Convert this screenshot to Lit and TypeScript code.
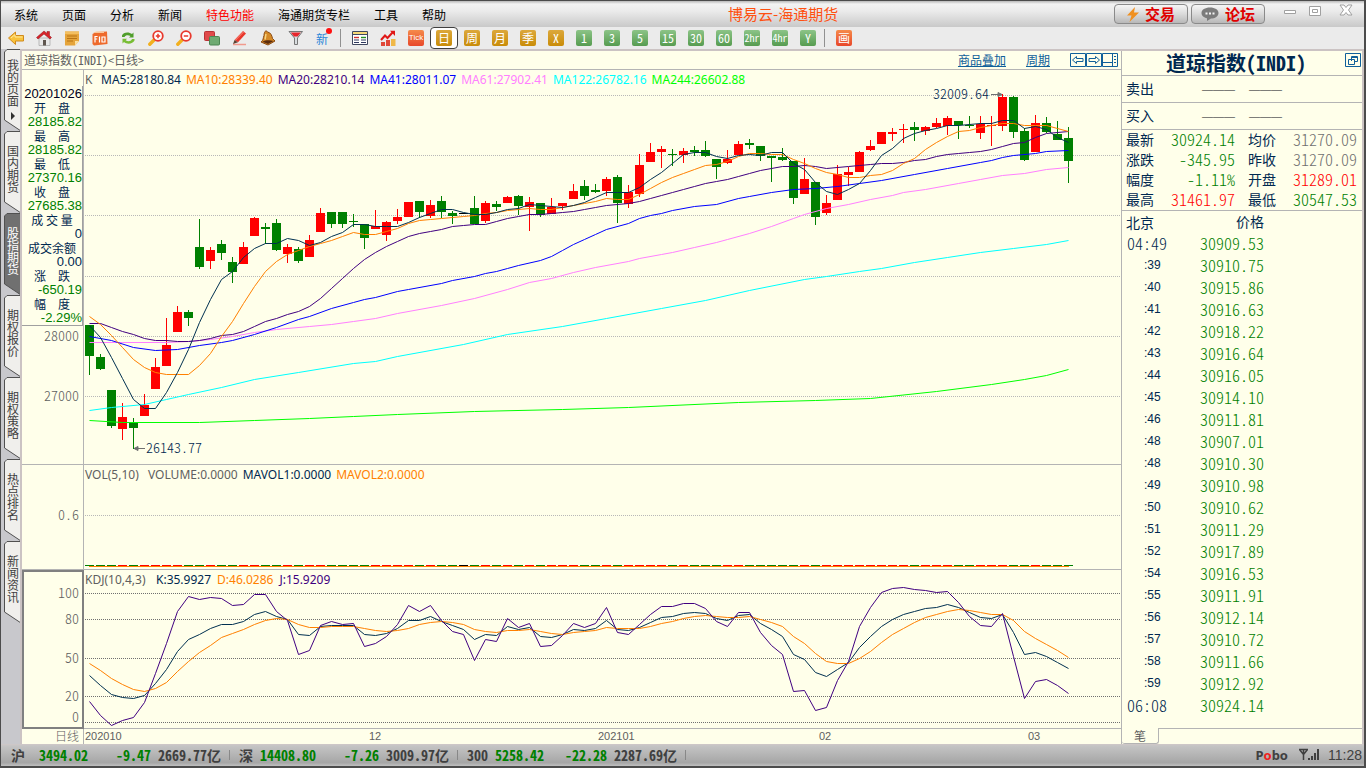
import { LitElement, html, svg, css } from "lit";
import { customElement } from "lit/decorators.js";
import { classMap } from "lit/directives/class-map.js";

type Candle = [string, number, number, number, number];

/* colour, body top, body bottom, wick top, wick bottom */
const CANDLES: Candle[] = [
  ["g", 325, 356, 325, 375], ["g", 357, 369, 354, 370], ["g", 390, 426, 390, 428], ["r", 417, 429, 403, 440],
  ["g", 422, 428, 418, 449], ["r", 405, 416, 394, 416], ["r", 367, 389, 358, 389], ["r", 345, 366, 318, 366],
  ["r", 312, 332, 306, 332], ["g", 312, 318, 310, 326], ["g", 247, 267, 219, 269], ["r", 250, 261, 247, 269],
  ["g", 244, 253, 240, 260], ["g", 262, 272, 257, 283], ["r", 247, 264, 242, 264], ["r", 218, 236, 217, 236],
  ["g", 227, 229, 223, 244], ["g", 223, 250, 219, 251], ["r", 247, 254, 244, 263], ["g", 249, 261, 247, 263],
  ["r", 240, 257, 235, 257], ["r", 213, 232, 208, 232], ["g", 212, 224, 212, 228], ["g", 212, 224, 212, 228],
  ["g", 221, 222, 214, 227], ["g", 224, 238, 224, 249], ["r", 226, 229, 210, 229], ["r", 222, 235, 221, 241],
  ["r", 217, 221, 209, 224], ["r", 202, 217, 202, 217], ["g", 201, 212, 201, 218], ["r", 205, 216, 200, 218],
  ["g", 201, 212, 196, 218], ["g", 213, 216, 211, 224], ["n", 213, 214, 213, 214], ["g", 208, 224, 196, 224],
  ["r", 203, 221, 201, 223], ["g", 204, 207, 201, 211], ["r", 197, 203, 196, 203], ["g", 196, 206, 195, 215],
  ["r", 202, 207, 197, 231], ["g", 203, 215, 203, 217], ["r", 207, 214, 198, 214], ["r", 203, 206, 203, 210],
  ["r", 191, 199, 184, 199], ["g", 186, 196, 180, 200], ["g", 190, 192, 184, 193], ["r", 179, 191, 177, 196],
  ["g", 177, 203, 175, 223], ["r", 192, 204, 185, 208], ["r", 165, 194, 154, 197], ["r", 152, 162, 143, 162],
  ["r", 149, 152, 146, 168], ["g", 154, 155, 149, 166], ["r", 151, 155, 148, 163], ["g", 150, 152, 146, 156],
  ["g", 150, 156, 141, 157], ["g", 159, 167, 159, 179], ["r", 159, 163, 150, 164], ["r", 144, 155, 141, 155],
  ["g", 143, 145, 139, 149], ["g", 146, 156, 146, 161], ["g", 156, 158, 156, 182], ["g", 157, 160, 148, 161],
  ["g", 161, 198, 161, 204], ["r", 179, 194, 158, 194], ["g", 182, 217, 182, 225], ["r", 203, 213, 195, 215],
  ["r", 174, 200, 165, 200], ["r", 172, 175, 167, 186], ["r", 152, 172, 151, 172], ["r", 146, 150, 140, 151],
  ["r", 132, 144, 132, 144], ["r", 132, 134, 128, 141], ["r", 129, 130, 124, 143], ["g", 127, 130, 122, 141],
  ["r", 127, 131, 126, 135], ["r", 123, 127, 118, 128], ["r", 118, 126, 116, 135], ["g", 121, 125, 121, 139],
  ["g", 125, 126, 116, 128], ["r", 124, 133, 116, 139], ["r", 125, 126, 116, 146], ["r", 97, 126, 94, 131],
  ["g", 97, 132, 96, 138], ["g", 131, 160, 128, 161], ["r", 123, 152, 115, 152], ["g", 123, 132, 117, 133],
  ["g", 134, 140, 121, 140], ["g", 138, 161, 127, 183],
];

/* one value per trading day */
const MA5 = [325, 337, 357, 378, 399, 408, 408, 392, 372, 349, 322, 299, 279, 271, 257, 248, 243, 243, 238, 240, 245, 242, 236, 232, 224, 224, 226, 226, 226, 222, 217, 213, 209, 209, 212, 214, 214, 212, 209, 208, 204, 205, 206, 207, 205, 202, 197, 192, 192, 192, 187, 179, 172, 163, 154, 152, 152, 156, 158, 155, 154, 155, 152, 152, 163, 169, 182, 191, 194, 189, 183, 170, 155, 148, 138, 133, 130, 128, 125, 125, 124, 123, 123, 120, 120, 128, 126, 129, 137, 142];
const MA10 = [316, 324, 335, 347, 359, 367, 372, 374, 374, 374, 365, 353, 336, 321, 303, 286, 271, 261, 254, 250, 246, 243, 240, 236, 232, 234, 234, 231, 228, 223, 220, 219, 218, 217, 216, 215, 213, 212, 210, 209, 208, 209, 209, 207, 205, 203, 201, 198, 199, 199, 194, 188, 182, 177, 173, 169, 165, 164, 161, 156, 153, 153, 154, 154, 159, 163, 168, 172, 174, 177, 177, 175, 174, 170, 163, 158, 149, 142, 136, 131, 130, 127, 125, 123, 123, 125, 125, 125, 128, 131];
const MA20 = [323, 323, 327, 331, 334, 338, 340, 340, 341, 341, 340, 338, 335, 334, 331, 326, 321, 318, 314, 311, 306, 298, 288, 278, 268, 259, 252, 246, 241, 236, 233, 231, 229, 226, 225, 224, 224, 221, 218, 216, 214, 214, 213, 212, 211, 209, 207, 205, 204, 203, 201, 198, 195, 192, 189, 186, 183, 181, 179, 176, 173, 170, 168, 166, 166, 165, 166, 168, 167, 166, 165, 164, 163, 163, 162, 160, 159, 156, 154, 153, 152, 151, 149, 146, 143, 142, 137, 133, 132, 131];
const KLINE = [675, 685, 694, 697, 698, 695, 683, 669, 651, 639, 634, 628, 624, 624, 621, 614, 611, 616, 619, 634, 635, 626, 625, 625, 625, 634, 635, 633, 628, 620, 620, 616, 621, 625, 629, 639, 634, 635, 626, 629, 627, 636, 637, 634, 629, 630, 628, 620, 629, 630, 627, 622, 617, 616, 613, 612, 613, 618, 620, 615, 614, 623, 629, 636, 654, 659, 672, 676, 669, 662, 647, 636, 626, 619, 614, 611, 608, 607, 604, 607, 612, 617, 618, 614, 632, 654, 652, 656, 662, 668];
const DLINE = [663, 670, 678, 684, 689, 691, 688, 682, 671, 661, 652, 645, 637, 633, 629, 624, 620, 618, 619, 624, 627, 627, 626, 626, 626, 628, 630, 631, 630, 628, 624, 622, 621, 622, 624, 629, 631, 632, 630, 630, 629, 631, 633, 634, 632, 631, 630, 627, 628, 628, 628, 626, 623, 621, 618, 616, 615, 616, 617, 617, 616, 619, 622, 626, 636, 643, 653, 661, 663, 663, 658, 651, 642, 634, 628, 622, 617, 614, 611, 609, 610, 612, 614, 614, 620, 631, 638, 644, 650, 657];
const JLINE = [701, 715, 725, 720, 717, 702, 673, 643, 611, 596, 599, 597, 598, 605, 604, 594, 594, 611, 620, 654, 650, 625, 621, 624, 623, 646, 643, 636, 624, 605, 611, 605, 620, 631, 634, 660, 639, 641, 618, 627, 623, 646, 645, 635, 623, 627, 623, 607, 632, 634, 624, 614, 606, 606, 603, 603, 608, 621, 626, 612, 612, 632, 645, 654, 691, 690, 710, 707, 680, 661, 626, 607, 592, 588, 587, 589, 590, 592, 591, 602, 616, 625, 626, 613, 656, 698, 681, 679, 685, 693];

/* slow averages: [day, value] */
const MA41 = [[0, 336], [2, 340], [4, 347], [6, 350], [8, 349], [10, 345], [12, 342], [13, 340], [15, 334], [17, 327], [19, 319], [20, 316], [22, 308], [24, 302], [25, 299], [26, 297], [28, 291], [29, 289], [32, 283], [33, 280], [35, 276], [36, 273], [37, 271], [38, 268], [39, 265], [41, 260], [42, 256], [43, 250], [44, 244], [45, 239], [46, 234], [47, 229], [49, 223], [50, 218], [51, 215], [52, 213], [53, 210], [55, 206], [57, 204], [59, 198], [60, 196], [62, 192], [64, 189], [66, 188], [68, 186], [70, 183], [72, 180], [75, 174], [78, 168], [81, 162], [82, 160], [83, 157], [84, 155], [86, 153], [87, 151], [89, 150]];
const MA61 = [[0, 342], [3, 342], [7, 342], [9, 341], [11, 339], [13, 336], [15, 332], [17, 329], [20, 326], [22, 324], [24, 321], [26, 318], [28, 313], [32, 305], [35, 298], [38, 289], [40, 282], [42, 278], [44, 272], [46, 267], [49, 261], [50, 258], [52, 254], [53, 252], [55, 247], [57, 242], [58, 239], [60, 233], [62, 226], [64, 218], [65, 214], [67, 208], [69, 204], [71, 199], [73, 195], [74, 192], [76, 189], [79, 183], [81, 179], [83, 175], [85, 173], [87, 169], [89, 167]];
const MA122 = [[0, 410], [2, 407], [5, 404], [7, 399], [9, 394], [12, 387], [15, 379], [19, 372], [24, 363], [26, 361], [28, 356], [34, 344], [38, 334], [43, 326], [47, 318], [52, 308], [56, 300], [60, 290], [65, 279], [67, 276], [70, 271], [72, 268], [75, 262], [78, 257], [81, 252], [84, 248], [87, 244], [89, 240]];
const MA244 = [[0, 420], [3, 422], [10, 422], [15, 420], [20, 418], [24, 416], [28, 414], [35, 411], [43, 409], [49, 407], [59, 402], [66, 400], [71, 398], [77, 391], [82, 384], [85, 379], [87, 375], [89, 369]];

const dayX = (i: number) => 89.5 + i * 11;
const daily = (ys: number[]) => ys.map((y, i) => `${dayX(i)},${y + 0.5}`).join(" ");
const sparse = (ps: number[][]) => ps.map(([i, y]) => `${dayX(i)},${y + 0.5}`).join(" ");
const pct = (v: number, from: number, size: number) => `${((v - from) / size) * 100}%`;

const MENU = ["系统", "页面", "分析", "新闻", "特色功能", "海通期货专栏", "工具", "帮助"];
const TABS = ["我的页面", "国内期货", "股指期货", "期权报价", "期权策略", "热点排名", "新闻资讯"];
const INFO = [
  ["开　盘", "28185.82", "up"], ["最　高", "28185.82", "up"], ["最　低", "27370.16", "up"], ["收　盘", "27685.38", "up"],
  ["成 交 量", "0", ""], ["成交余额", "0.00", ""], ["涨　跌", "-650.19", "up"], ["幅　度", "-2.29%", "up"],
];
const QUOTES = [
  ["最新", "30924.14", "green", "均价", "31270.09", "gray"],
  ["涨跌", "-345.95", "green", "昨收", "31270.09", "gray"],
  ["幅度", "-1.11%", "green", "开盘", "31289.01", "red"],
  ["最高", "31461.97", "red", "最低", "30547.53", "green"],
];
const TICKS = [
  ["04:49", "30909.53"], [":39", "30910.75"], [":40", "30915.86"], [":41", "30916.63"], [":42", "30918.22"],
  [":43", "30916.64"], [":44", "30916.05"], [":45", "30914.10"], [":46", "30911.81"], [":48", "30907.01"],
  [":48", "30910.30"], [":49", "30910.98"], [":50", "30910.62"], [":51", "30911.29"], [":52", "30917.89"],
  [":54", "30916.53"], [":55", "30911.91"], [":56", "30912.14"], [":57", "30910.72"], [":58", "30911.66"],
  [":59", "30912.92"], ["06:08", "30924.14"],
];
const INDEXES = [
  ["沪", "3494.02", "-9.47", "2669.77亿"],
  ["深", "14408.80", "-7.26", "3009.97亿"],
  ["300", "5258.42", "-22.28", "2287.69亿"],
];

const ICONS: [string, unknown][] = [
  ["后退", svg`<path d="M0.5 8L7.5 2V5.5H15.5V11H7.5V14.5Z" fill="#f8c33c" stroke="#d08a1c"/><path d="M3 8L7 4.6V7H14.5" fill="none" stroke="#ffe89a"/>`],
  ["首页", svg`<path d="M3 8H14V15.5H3Z" fill="#e8e8e8" stroke="#999" stroke-width=".6"/><path d="M8 1L0.5 7.5L2 9L8 4L14 9L15.5 7.5L13.5 5.6V1.5H11V3.4Z" fill="#d8232a" stroke="#8d1218" stroke-width=".5"/><path d="M7 10H10V15.5H7Z" fill="#5f564f"/>`],
  ["便签", svg`<path d="M1 1.5H15V11L11 15.5H1Z" fill="#e5a43a"/><path d="M1 1.5H15V4H1Z" fill="#f3bf60"/><path d="M15 11L11 15.5V11Z" fill="#fbe0a0"/><path d="M3 6H13M3 8.5H13M3 11H9" stroke="#b87414"/>`],
  ["F10", svg`<path d="M0.5 4L4 2L15 1.5L15.5 14L2 15.5L0.5 14Z" fill="#ee6a2c"/><path d="M1 3H12V1.5H4Z" fill="#f9c79b"/><path d="M3 12.5V6.5H5.6M3 9H5.2M7.5 6.5V12.5M10 7H13V12H10Z" fill="none" stroke="#fff" stroke-width="1.2"/>`],
  ["刷新", svg`<path d="M2 7V5.5C3 2 9 1.5 12 4L13.5 2.5V7.5H9L10.5 6C8 4.5 5.5 5 4.5 7Z" fill="#4f9d2b"/><path d="M14.5 9V10.5C13 14 7 14.8 4 12L2.5 13.5V8.8H7L5.7 10.2C8 12 11 11.3 12 9Z" fill="#78bd35"/>`],
  ["放大", svg`<path d="M1.8 14.2L6 10" stroke="#f2b01e" stroke-width="3.4" stroke-linecap="round"/><circle cx="10" cy="6" r="4.8" fill="#fff" stroke="#e8392d" stroke-width="1.8"/><path d="M7.8 6H12.2M10 3.8V8.2" stroke="#e8392d" stroke-width="1.5"/>`],
  ["缩小", svg`<path d="M1.8 14.2L6 10" stroke="#f2b01e" stroke-width="3.4" stroke-linecap="round"/><circle cx="10" cy="6" r="4.8" fill="#fff" stroke="#e8392d" stroke-width="1.8"/><path d="M7.8 6H12.2" stroke="#e8392d" stroke-width="1.5"/>`],
  ["叠加", svg`<rect x=".5" y="1.5" width="10" height="9" rx="1" fill="#e04a4a" stroke="#b83236"/><rect x="5.5" y="6.5" width="10" height="8.500" rx="1" fill="#6eaa72" stroke="#4b8652"/>`],
  ["画线", svg`<path d="M1 14.500H14" stroke="#f19a8d" stroke-width="1.5"/><path d="M2.5 10L11 1L14 3.500L6 12.200Z" fill="#e8372b"/><path d="M2.500 10L1 14L6 12.200Z" fill="#5b4433"/><path d="M3.600 10L11.500 2" stroke="#ff8d80"/>`],
  ["预警", svg`<path d="M5 1.500C6 0.500 7 1 7.500 2C11 2.500 12 6 12.500 8.500L15 11L8 15L1 12C3.500 10.500 3 8 4 5.500C4 3.500 4.500 2.500 5 1.500Z" fill="#d58a28" stroke="#8a4a12"/><path d="M2.500 11.800L8 14L13.500 11C10 10 5.500 10 2.500 11.800Z" fill="#5c2c0c"/><path d="M6 4C5.500 6 5.500 8 5 9.500" stroke="#f8d480" stroke-width="1.500" fill="none"/>`],
  ["筛选", svg`<path d="M1 1.500H14.500L9.500 8V14.500H6.500V8Z" fill="#d9dde0" stroke="#777"/><path d="M2.800 2.500H12.800L9.600 6.500H6Z" fill="#e8252c"/>`],
];

const icon = (label: string, body: unknown) =>
  html`<button class="tool" aria-label=${label}><svg class="glyph" viewBox="0 0 16 16">${body}</svg></button>`;

const grid = (ys: number[], cls: string) =>
  ys.map((y) => svg`<line class=${cls} x1="85" x2="1121" y1=${y + 0.5} y2=${y + 0.5}></line>`);

@customElement("price-chart")
class PriceChart extends LitElement {
  static styles = css`
    :host {
      display: grid;
      grid-template-columns: 62px minmax(0, 1fr);
      grid-template-rows: 395fr 105fr 159fr 15px;
      min-height: 0;
      font: 300 14px/14px "Noto Sans CJK SC", sans-serif;
      font-feature-settings: "hwid";
      color: #606060;
    }
    .axis, .plot { position: relative; border-bottom: 1px solid #b4b4b4; min-height: 0; }
    .axis { border-right: 1px solid #b4b4b4; }
    .plot { border-right: 1px solid #b4b4b4; }
    .boxed { border: 2px solid #808080; }
    .mark { position: absolute; right: 4px; margin-top: -8px; }
    .boxed .mark { right: 3px; }
    .info {
      box-sizing: border-box;
      position: absolute;
      top: 16px;
      left: 0;
      right: 0;
      border-right: 1px solid #a0a0a0;
      border-bottom: 1px solid #a0a0a0;
      background: #ffffea;
      margin: 0;
      padding-top: 1px;
      font: 13px/14px "Liberation Sans", "Noto Sans CJK SC", sans-serif;
      color: #002850;
      text-align: right;
    }
    .info dt { font: 12px/14px "Noto Sans CJK SC", sans-serif; text-align: center; }
    .info dd { margin: 0; }
    .info .date { color: #000020; }
    .info .up { color: #008000; }
    .canvas { position: absolute; inset: 0; width: 100%; height: 100%; display: block; }
    .legend {
      position: relative;
      display: flex;
      gap: 5px;
      padding: 2px 0 0 1px;
      font: 12px/16px "Noto Sans", sans-serif;
      font-feature-settings: normal;
      white-space: nowrap;
    }
    .k-legend span:first-child { min-width: 11px; }
    .vol-legend span:first-child { min-width: 58px; }
    .kdj-legend { gap: 6px; }
    .kdj-legend span:first-child { min-width: 65px; }
    .note { position: absolute; margin-top: -8px; color: #002850; }
    .grid, .gridk { stroke: #b8b8b8; stroke-dasharray: 1 1; }
    .gridk { stroke: #707070; }
    .line { fill: none; stroke-width: 1; vector-effect: non-scaling-stroke; }
    .r { fill: #ff0000; } .g { fill: #008000; } .n { fill: #000; }
    .navy { stroke: #003050; } .orange { stroke: #ff8000; } .purple { stroke: #400080; }
    .blue { stroke: #0000ff; } .pink { stroke: #ff80ff; } .cyan { stroke: #00ffff; } .lime { stroke: #00ff00; }
    .t-navy { color: #002850; } .t-orange { color: #ff8000; } .t-purple { color: #400080; }
    .t-blue { color: #0000ff; } .t-pink { color: #ff80ff; } .t-cyan { color: #00ffff; } .t-lime { color: #00ff00; }
    .avg { fill: #ff8000; }
    .arrow { stroke: #707070; fill: #707070; }
    .period { box-sizing: border-box; border-right: 1px solid #b4b4b4; padding-right: 4px; text-align: right; font-size: 12px; }
    .dates { position: relative; border-right: 1px solid #b4b4b4; font: 11px/14px "Liberation Sans", sans-serif; }
    .dates span { position: absolute; }
  `;

  render() {
    return html`
      <div class="axis">
        <dl class="info">
          <dd class="date">20201026</dd>
          ${INFO.map(([k, v, c]) => html`<dt>${k}</dt><dd class=${c}>${v}</dd>`)}
        </dl>
        ${[[28000, 336], [27000, 396]].map(([t, y]) => html`<span class="mark" style="top:${pct(y, 70, 394)}">${t}</span>`)}
      </div>
      <div class="plot">
        <svg class="canvas" viewBox="84 70 1037 394" preserveAspectRatio="none">
          ${grid([95, 155, 215, 276, 336, 396], "grid")}
          <g shape-rendering="crispEdges">
            ${CANDLES.map(([c, t, b, h, l], i) => svg`<rect class=${c} x=${85 + i * 11} y=${t} width="9" height=${b - t}></rect><rect class=${c} x=${89 + i * 11} y=${h} width="1" height=${l - h}></rect>`)}
          </g>
          <polyline class="line lime" points=${sparse(MA244)}></polyline>
          <polyline class="line cyan" points=${sparse(MA122)}></polyline>
          <polyline class="line pink" points=${sparse(MA61)}></polyline>
          <polyline class="line blue" points=${sparse(MA41)}></polyline>
          <polyline class="line purple" points=${daily(MA20)}></polyline>
          <polyline class="line orange" points=${daily(MA10)}></polyline>
          <polyline class="line navy" points=${daily(MA5)}></polyline>
          <path class="arrow" d="M134 448.500H145M134 448.500L138 446.500V450.500Z"></path>
          <path class="arrow" d="M991 94.500H1002M1002 94.500L998 92.500V96.500Z"></path>
        </svg>
        <div class="legend k-legend">
          <span>K</span><span class="t-navy">MA5:28180.84</span><span class="t-orange">MA10:28339.40</span>
          <span class="t-purple">MA20:28210.14</span><span class="t-blue">MA41:28011.07</span>
          <span class="t-pink">MA61:27902.41</span><span class="t-cyan">MA122:26782.16</span>
          <span class="t-lime">MA244:26602.88</span>
        </div>
        <span class="note" style="left:${pct(146, 84, 1037)};top:${pct(448, 70, 394)}">26143.77</span>
        <span class="note" style="left:${pct(933, 84, 1037)};top:${pct(94, 70, 394)}">32009.64</span>
      </div>

      <div class="axis"><span class="mark" style="top:${pct(515, 465, 104)}">0.6</span></div>
      <div class="plot">
        <svg class="canvas" viewBox="84 465 1037 104" preserveAspectRatio="none">
          ${grid([515], "grid")}
          <g shape-rendering="crispEdges">
            ${CANDLES.map(([c], i) => svg`<rect class=${c} x=${85 + i * 11} y="565" width="9" height="1"></rect>`)}
            <rect class="avg" x="89" y="566" width="980" height="1"></rect>
          </g>
        </svg>
        <div class="legend vol-legend">
          <span>VOL(5,10)</span><span>VOLUME:0.0000</span><span class="t-navy">MAVOL1:0.0000</span><span class="t-orange">MAVOL2:0.0000</span>
        </div>
      </div>

      <div class="axis boxed">
        ${[[100, 593], [80, 619], [50, 658], [20, 696], [0, 717]].map(([t, y]) => html`<span class="mark" style="top:${pct(y, 572, 155)}">${t}</span>`)}
      </div>
      <div class="plot">
        <svg class="canvas" viewBox="84 570 1037 158" preserveAspectRatio="none">
          ${grid([593, 619, 658, 696, 722], "gridk")}
          <polyline class="line navy" points=${daily(KLINE)}></polyline>
          <polyline class="line orange" points=${daily(DLINE)}></polyline>
          <polyline class="line purple" points=${daily(JLINE)}></polyline>
        </svg>
        <div class="legend kdj-legend">
          <span>KDJ(10,4,3)</span><span class="t-navy">K:35.9927</span><span class="t-orange">D:46.0286</span><span class="t-purple">J:15.9209</span>
        </div>
      </div>

      <div class="period">日线</div>
      <div class="dates">
        ${[["202010", 85], ["12", 369], ["202101", 598], ["02", 819], ["03", 1028]].map(([t, x]) => html`<span style="left:${pct(x as number, 84, 1037)}">${t}</span>`)}
      </div>
    `;
  }
}

@customElement("quote-panel")
class QuotePanel extends LitElement {
  static styles = css`
    :host {
      display: flex;
      flex-direction: column;
      min-height: 0;
      font: 14px/20px "Noto Sans CJK SC", sans-serif;
      font-feature-settings: "hwid";
      color: #002850;
    }
    .head { display: grid; grid-template-columns: 1fr 16px; align-items: start; padding: 0 1px 0 5px; height: 24px; border-bottom: 1px solid #b4b4b4; }
    .name { margin: 0; text-align: center; font-size: 20px; line-height: 24px; font-weight: 700; white-space: nowrap; }
    .pop { padding: 0; border: 0; background: none; width: 16px; height: 16px; margin-top: 1px; display: block; }
    .pop svg { display: block; }
    .book { display: grid; grid-template-columns: 76px 47px 1fr; height: 26px; line-height: 24px; padding-left: 4px; border-bottom: 1px solid #b4b4b4; }
    .dash { font: 11px/26px "Liberation Sans", sans-serif; color: #606060; }
    table { border-collapse: collapse; width: 100%; }
    td, th { padding: 0; font-weight: 400; text-align: left; }
    .quotes { border-bottom: 1px solid #b4b4b4; line-height: 18px; }
    .quotes th { height: 18px; padding: 0 0 2px 4px; width: 28px; }
    .quotes th + td { width: 81px; }
    .quotes td { font-size: 16px; font-weight: 300; text-align: right; padding-bottom: 2px; }
    .quotes td + th { padding-left: 13px; }
    .quotes td:last-child { padding-right: 5px; }
    .ticks { line-height: 20px; }
    .ticks th:first-child { padding-left: 4px; width: 34px; }
    .ticks td { height: 20px; font-size: 16px; font-weight: 300; color: #008000; }
    .ticks td, .ticks th + th { padding: 0 98px 2px 0; text-align: right; }
    .ticks .time { padding: 0 0 2px 5px; color: #002850; text-align: left; }
    .ticks .sec { padding: 0 0 2px 22px; font: 12px/20px "Liberation Sans", sans-serif; color: #002850; text-align: left; }
    .quotes .green { color: #008000; } .quotes .red { color: #ff0000; } .quotes .gray { color: #707070; }
    .foot { display: flex; margin-top: auto; height: 16px; }
    .foot::after { content: ""; flex: 1; border-top: 1px solid #b4b4b4; }
    .tab { width: 37px; padding: 0; border: 1px solid #b4b4b4; border-top: 0; border-left: 0; border-radius: 0 0 3px 3px; background: none; color: #606060; font: 12px/14px "Noto Sans CJK SC", sans-serif; }
  `;

  render() {
    return html`
      <div class="head">
        <h1 class="name">道琼指数(INDI)</h1>
        <button class="pop" aria-label="弹出窗口">
          <svg width="16" height="16" viewBox="0 0 16 16" fill="none" stroke="#10609a"><path d="M.5 1.500H15.500V14.500H.5ZM6.500 4.500H12.500V9.500H6.500ZM6.500 5.500H12.500M3.500 7.500H9.500V12.500H3.500Z"/><path d="M4 9H9V12H4Z" fill="#ffffea" stroke="none"/></svg>
        </button>
      </div>
      <div class="book"><span>卖出</span><span class="dash">———</span><span class="dash">———</span></div>
      <div class="book"><span>买入</span><span class="dash">———</span><span class="dash">———</span></div>
      <table class="quotes">
        ${QUOTES.map(([a, b, c, d, e, f]) => html`<tr><th>${a}</th><td class=${c}>${b}</td><th>${d}</th><td class=${f}>${e}</td></tr>`)}
      </table>
      <table class="ticks">
        <tr><th>北京</th><th>价格</th></tr>
        ${TICKS.map(([t, p]) => html`<tr><td class=${t.startsWith(":") ? "sec" : "time"}>${t}</td><td>${p}</td></tr>`)}
      </table>
      <div class="foot"><button class="tab">笔</button></div>
    `;
  }
}

@customElement("app-root")
class AppRoot extends LitElement {
  static styles = css`
    :host {
      box-sizing: border-box;
      display: flex;
      flex-direction: column;
      height: 100vh;
      background: #ebebeb;
      border: solid #4c4c4c;
      border-width: 1px 2px 2px 1px;
      font: 12px/14px "Noto Sans CJK SC", sans-serif;
      color: #000;
    }
    button { font-family: inherit; color: inherit; }
    .bar { display: flex; flex: none; height: 26px; background: linear-gradient(#b8b8b8, #f3f3f3 3px, #ebebeb 10px, #c9c9c9); }
    .menu { display: flex; }
    .menu button { padding: 0 12px; border: 0; background: none; font-size: 12px; white-space: nowrap; }
    .menu button:first-child { padding-left: 13px; }
    .menu button:last-child { padding-right: 6px; }
    .menu .hot { color: #ff0000; }
    .title { flex: 1; text-align: center; font-size: 15px; line-height: 26px; color: #ff5010; }
    .action {
      box-sizing: border-box; width: 74px; height: 20px; margin: 3px 3px 0 0; padding: 0;
      display: flex; align-items: center; justify-content: center; gap: 6px;
      border: 1px solid #8a8a8a; border-radius: 4px; background: linear-gradient(#f6f6f6, #dadada 50%, #b8b8b8);
      color: #e00000; font-size: 15px; line-height: 16px; font-weight: 700;
    }
    .action svg, .win svg { display: block; }
    .wins { display: flex; padding-left: 9px; }
    .win { display: flex; justify-content: center; width: 25px; padding: 2px 0 0; border: 0; background: none; }
    .win:last-child { width: 37px; }

    .tools { display: flex; flex: none; height: 22px; padding-left: 1px; }
    .tool { display: flex; align-items: center; justify-content: center; width: 28px; padding: 0; border: 0; background: none; }
    .glyph { width: 16px; height: 16px; display: block; }
    .on { border: 1px solid #404040; border-radius: 4px; background: #fff; }
    .tile { width: 16px; height: 16px; border-radius: 2px; font-size: 12px; line-height: 15px; text-align: center; color: #fff; background: linear-gradient(#dca83c, #c98c08); font-feature-settings: "hwid"; }
    .min { background: linear-gradient(#8cc487, #569c50); }
    .warm { background: linear-gradient(#f58a4a, #e8482a); }
    .tick { font: 8px/16px "Liberation Sans", sans-serif; }
    .small { font-size: 10px; }
    .xin { color: #2a86d8; font-size: 12px; position: relative; width: 16px; text-align: left; }
    .xin::after { content: ""; position: absolute; left: 10px; top: -2px; width: 6px; height: 6px; border-radius: 50%; background: #ff1010; }
    .sep { width: 1px; margin: 2px 5px 2px 2px; background: #909090; }

    .main {
      flex: 1; min-height: 0; display: grid;
      grid-template-columns: 19px minmax(0, 1fr) 240px;
      border-right: 2px solid #cbc3c3;
    }
    .side { background: #c8c8cc; padding-left: 3px; }
    .side button { position: relative; display: flex; flex-direction: column; justify-content: flex-start; align-items: flex-start; box-sizing: border-box; width: 16px; height: 82px; padding: 14px 0 0 3px; border: 0; background: none; }
    .side button:first-child { padding-top: 10px; }
    .side svg { position: absolute; left: 0; top: 0; width: 16px; height: 82px; }
    .shape { fill: #f0efec; stroke: #505050; }
    .cur .shape { fill: #707070; }
    .side span { position: relative; width: 12px; font-size: 12px; line-height: 12px; color: #404040; word-break: break-all; }
    .side .cur span { color: #fff; }
    .side .more { width: 0; height: 0; margin: 5px 0 0 4px; border: solid transparent; border-width: 4px 0 4px 4px; border-left-color: #303030; }

    .work { display: flex; flex-direction: column; min-height: 0; background: #ffffea; border-left: 2px solid #cbc3c3; border-top: 2px solid #cbc3c3; }
    .caption { display: flex; align-items: center; flex: none; height: 18px; padding: 0 3px 0 2px; border-bottom: 1px solid #b4b4b4; border-right: 1px solid #b4b4b4; color: #606060; font-feature-settings: "hwid"; }
    .caption a { margin-right: 20px; color: #10609a; }
    .caption b { flex: 1; font-weight: 400; }
    .nav { width: 16px; height: 14px; padding: 0; border: 0; background: none; }
    .nav svg { display: block; }
    price-chart { flex: 1; }
    quote-panel { background: #ffffea; border-top: 2px solid #cbc3c3; }

    .status {
      display: flex; align-items: center; flex: none; height: 22px; padding-left: 10px;
      background: linear-gradient(#d0c8c8, #c4c4c4 2px, #a6a6a6 85%, #c0c0c0);
      font-size: 14px; line-height: 20px; color: #404040; font-feature-settings: "hwid"; font-weight: 700;
    }
    .index { display: grid; grid-template-columns: 77px 63px 70px; padding-right: 9px; margin-right: 9px; background: linear-gradient(#888, #888) right / 1px 10px no-repeat; text-align: right; }
    .pair { display: flex; justify-content: space-between; }
    .pair i { font-style: normal; }
    .dn { color: #008000; }
    .brand { margin-left: auto; font: 700 13px/20px "Noto Sans", sans-serif; }
    .brand em { font-style: normal; color: #f02020; }
    .signal { margin: 0 8px 0 10px; }
    .clock { font: 14px/20px "Liberation Sans", sans-serif; padding-right: 2px; }
  `;

  private tile(text: string, kind: Record<string, boolean> = {}, on = false) {
    return html`<button class=${classMap({ tool: true, on })}><span class=${classMap({ tile: true, ...kind })}>${text}</span></button>`;
  }

  render() {
    return html`
      <header class="bar">
        <nav class="menu">
          ${MENU.map((m) => html`<button class=${classMap({ hot: m === "特色功能" })}>${m}</button>`)}
        </nav>
        <div class="title">博易云-海通期货</div>
        <button class="action"><svg width="12" height="15" viewBox="0 0 12 15"><path d="M8 0L0 8.500H4.500L2.500 15L12 5.500H7Z" fill="#f09020"/></svg>交易</button>
        <button class="action"><svg width="18" height="14" viewBox="0 0 18 14"><path d="M9 0.500C14 0.500 17.500 2.800 17.500 6C17.500 9.500 14 11.500 10 11.500L6 14V11.200C3 10.600.5 8.800.5 6C.5 2.800 4 .5 9 .5Z" fill="#7c7c7c"/><path d="M4.500 5.500h2v2h-2zM8 5.500h2v2H8zM11.500 5.500h2v2h-2z" fill="#f4f4f4"/></svg>论坛</button>
        <div class="wins">
          <button class="win" aria-label="最小化"><svg width="14" height="14" viewBox="0 0 14 14"><path d="M1.500 7.500H12.500V10.500H1.500Z" fill="#fff" stroke="#a0a0a0"/></svg></button>
          <button class="win" aria-label="最大化"><svg width="14" height="14" viewBox="0 0 14 14"><path d="M1.500 3.500H12.500V12.500H1.500ZM4.500 6.500H9.500V9.500H4.500Z" fill="#fff" stroke="#a0a0a0"/></svg></button>
          <button class="win" aria-label="关闭"><svg width="14" height="14" viewBox="0 0 14 14"><path d="M1 2H5L7 4.500L9 2H13L9.500 7L13 12H9L7 9.500L5 12H1L4.500 7Z" fill="#fff" stroke="#a0a0a0"/></svg></button>
        </div>
      </header>

      <div class="tools">
        ${ICONS.map(([l, b]) => icon(l, b))}
        <button class="tool"><span class="xin">新</span></button>
        <span class="sep"></span>
        ${icon("报价表", svg`<path d="M.5 1.500H15.500V14.500H.5Z" fill="#fff" stroke="#404860"/><path d="M1 2H15V4H1Z" fill="#f4d878"/><path d="M.5 4.500H15.500" stroke="#404860"/><path d="M2 7.500H7" stroke="#d03030" stroke-width="1.400"/><path d="M9 7.500H14" stroke="#209020" stroke-width="1.400"/><path d="M2 10H7M2 12.500H7M9 10H14M9 12.500H14" stroke="#303a60" stroke-width="1.200"/>`)}
        ${icon("走势图", svg`<path d="M1 12H5V16H1ZM6 10H10V16H6Z" fill="#e04838"/><path d="M11 9H15.500V16H11Z" fill="#f0b848"/><path d="M1 10L5 5.500L7.500 8L13 2" fill="none" stroke="#e01818" stroke-width="2"/><path d="M10 .8H15V6Z" fill="#e01818"/>`)}
        ${this.tile("Tick", { warm: true, tick: true })}
        ${this.tile("日", {}, true)}
        ${["周", "月", "季", "X"].map((t) => this.tile(t))}
        ${["1", "3", "5", "15", "30", "60"].map((t) => this.tile(t, { min: true }))}
        ${["2hr", "4hr"].map((t) => this.tile(t, { min: true, small: true }))}
        ${this.tile("Y", { min: true })}
        <span class="sep"></span>
        ${this.tile("画", { warm: true })}
      </div>

      <div class="main">
        <nav class="side">
          ${TABS.map((t, i) => html`<button class=${classMap({ cur: i === 2 })}>
            <svg viewBox="0 0 16 82"><path class="shape" d="M17 .5H3L.5 3V71L17 82"/></svg>
            <span>${t}</span>${i === 0 ? html`<span class="more"></span>` : ""}
          </button>`)}
        </nav>
        <section class="work">
          <div class="caption">
            <b>道琼指数(INDI)&lt;日线&gt;</b>
            <a href="#overlay">商品叠加</a><a href="#period">周期</a>
            <button class="nav" aria-label="向左"><svg width="16" height="14" viewBox="0 0 16 14" fill="none" stroke="#10609a"><path d="M.5.5H15.500V13.500H.5ZM2.500 7L6.500 3.500V5.500H13V8.500H6.500V10.500Z"/></svg></button>
            <button class="nav" aria-label="向右"><svg width="16" height="14" viewBox="0 0 16 14" fill="none" stroke="#10609a"><path d="M.5.5H15.500V13.500H.5ZM13.500 7L9.500 3.500V5.500H3V8.500H9.500V10.500Z"/></svg></button>
            <button class="nav" aria-label="布局"><svg width="16" height="14" viewBox="0 0 16 14" fill="none" stroke="#10609a"><path d="M.5.5H15.500V13.500H.5ZM10.500.5V13.500M.5 9.500H10.500M12 3.500H14M12 6.500H14M12 9.500H14"/></svg></button>
          </div>
          <price-chart></price-chart>
        </section>
        <quote-panel></quote-panel>
      </div>

      <footer class="status">
        ${INDEXES.map(([n, v, c, a]) => html`<div class="index"><span class="pair"><i>${n}</i><i class="dn">${v}</i></span><span class="dn">${c}</span><span>${a}</span></div>`)}
        <span class="brand">P<em>o</em>bo</span>
        <svg class="signal" width="22" height="14" viewBox="0 0 22 14"><path d="M1 1.500H10M1.500 1.500L5.500 6.500L9.500 1.500M5.500 1.500V12" fill="none" stroke="#404040" stroke-width="1.500"/><path d="M10 10H12V12H10ZM13 8H15V12H13ZM16 5H18V12H16ZM19 1H21V12H19Z" fill="#404040"/></svg>
        <span class="clock">11:28</span>
      </footer>
    `;
  }
}
